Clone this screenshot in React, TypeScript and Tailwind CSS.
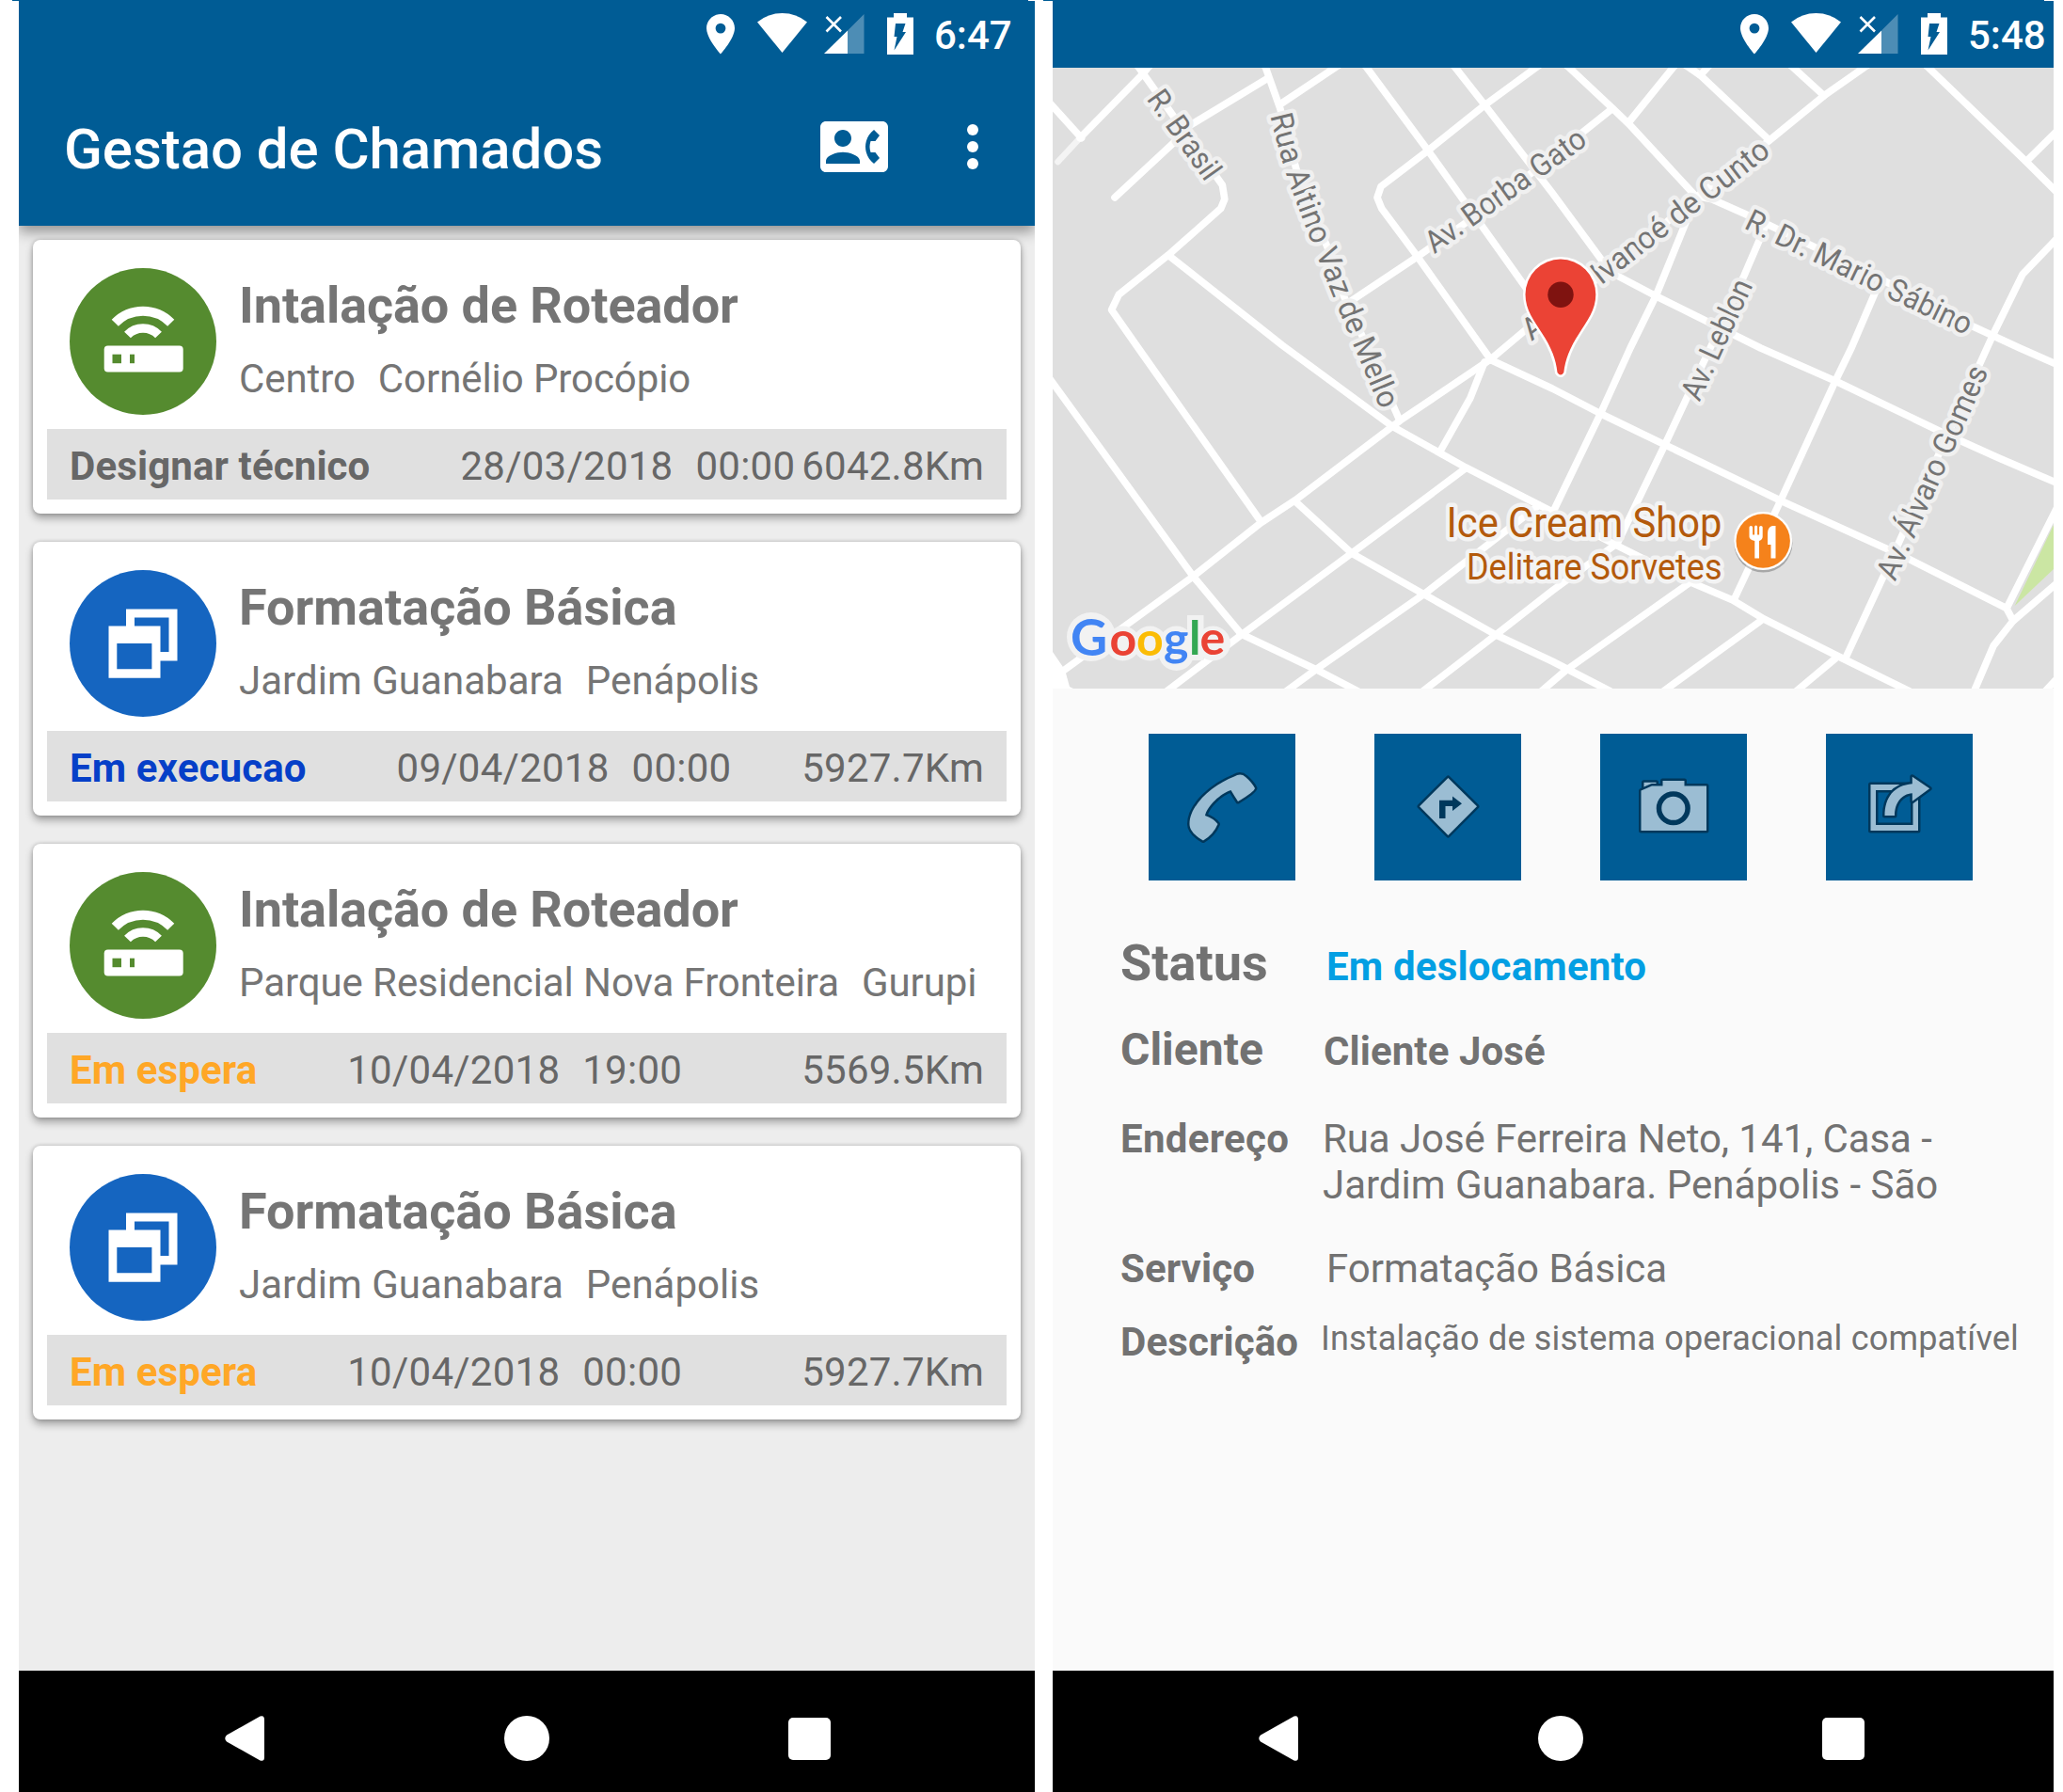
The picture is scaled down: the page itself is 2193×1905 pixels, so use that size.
import React from "react";

const roads: string[] = [
  "M1223.6 68L1215 78.3L1148 146.7",
  "M1208 68L1215 78L1299.4 196.7L1301.8 211.7L1297.7 221.7L1242.6 270.5L1189.2 313.3L1181.6 329.3L1210 370L1340 554",
  "M1115 108.5L1149.6 146.7",
  "M1347.6 83.3L1265 133.3L1246 153.3L1185 210",
  "M1344 68L1360.7 115L1382 195L1411.3 263.3L1428.5 315L1454 370L1487 445",
  "M1360.7 111L1425 68",
  "M1450 68L1518 160L1568 230L1620 303L1645 337",
  "M1544 68L1578.3 111.7L1650 205L1708.9 285L1719 293L1760.8 315L1871.6 370L1951 405L2069 461.7L2124.4 486.7L2190 515",
  "M1638 68L1578.3 111.7L1518 160L1468 198.3L1464 210L1468.8 221.7L1506 271.7L1576.6 371L1585 382.7",
  "M1712.3 116.7L1633 180L1575 225L1506 273.3L1433.7 321.7",
  "M1663.9 68L1714 115L1731.4 131.7L1802.4 208.3L1819.7 211.7L1864.7 231.7L1996 295L2096.7 346.7L2147 370L2190 389",
  "M1781.6 68L1731.4 130",
  "M1790 68L1807.5 80L1880 148.3",
  "M1820 66L1807.5 80",
  "M1902 68L1939 101.7",
  "M1987 68L1939 101.7L1880 150L1802.4 210L1712 286.7L1626.5 346.7L1585 381.7L1488.8 446.7L1376.9 531.7L1340 556L1268.4 612.7L1130.7 712.7",
  "M2046 68L2153.8 171.7L2190 208",
  "M2153.8 171.7L2190 136",
  "M2190 250L2150 291.7L2119 355L2075.9 450L2006.6 603L1961.6 700",
  "M1802 212L1760.8 313.3L1733 370L1702 438.3L1651 544",
  "M1876.8 240L1854 293L1818 370L1769.5 473.3L1719 578",
  "M1998 300L1968 370L1951 405L1892.4 533L1843 638",
  "M1585 382.7L1650 413L1702 440L1771 473.3L1892.4 532L2024 591.7L2133 646.7L2140 660L2119 686.7L2098 736",
  "M2140 660L2190 617",
  "M2133 646.7L2190 533",
  "M2190 718L2172 737",
  "M1578 385L1562.8 423.3L1530.8 480",
  "M1242.6 271.7L1363 367L1480 453.3L1557.7 496.7L1650 544L1719 580L1795.4 618.3L1842 638L1875 658L1954.7 698L2030 735",
  "M1114 400L1268.4 612.7L1319.4 674L1399 711.7L1444 735",
  "M1376.9 533L1437 588.3L1513.6 631.7L1590.4 675L1650 703L1712 735",
  "M1557.7 498L1437 588L1319.4 675L1240 735",
  "M1636 537L1513.6 631.7L1399 711.7L1367 735",
  "M1715.8 580L1650 628L1590 675L1511 736",
  "M1795.4 620L1664 713L1636 737",
  "M1871.6 660L1768 735",
  "M1951 700L1908 736",
];

type Street = { id: string; d: string; text: string; length: number };

const streets: Street[] = [
  { id: "brasil", d: "M1227.5 98.5L1292 189", text: "R. Brasil", length: 109 },
  { id: "altino", d: "M1361.5 120C1368 148 1375 172 1382 193L1403 249L1426.5 308L1455.5 377L1485 447", text: "Rua Altino Vaz de Mello", length: 333 },
  { id: "borba", d: "M1518 261L1700 130.5", text: "Av. Borba Gato", length: 202 },
  { id: "ivanoe", d: "M1695 294.5L1890 144", text: "Ivanoé de Cunto", length: 229 },
  { id: "sabino", d: "M1858 232L2110 353.5", text: "R. Dr. Mario Sábino", length: 263 },
  { id: "leblon", d: "M1796 423L1857 290", text: "Av. Leblon", length: 137 },
  { id: "alvaro", d: "M2004 614L2107 382", text: "Av. Álvaro Gomes", length: 245 },
];

function MapView() {
  return (
    <svg className="block h-[660px] w-[1064px]" viewBox="1119 72 1064 660" fontFamily="Roboto, sans-serif">
      <rect x="1119" y="72" width="1064" height="660" fill="#dfdfdf" />
      <polygon points="2184,556 2141.7,644 2184,604" fill="#cbe6a3" />
      <path d="M1148 146.7L1124.5 172" stroke="#f4f4f4" strokeWidth="6.5" strokeLinecap="round" />
      <g fill="none" stroke="#fff" strokeWidth="7.6" strokeLinecap="round" strokeLinejoin="round">
        {roads.map((d) => (
          <path key={d} d={d} />
        ))}
      </g>
      <polygon points="1119,693 1132,712 1137,730 1141,732 1119,732" fill="#fff" />

      <defs>
        {streets.map((s) => (
          <path key={s.id} id={s.id} d={s.d} />
        ))}
      </defs>
      <g fontSize="33" fill="#747474" stroke="#f0f0f0" strokeWidth="9" strokeLinejoin="round" paintOrder="stroke">
        {streets.map((s) => (
          <text key={s.id} dy="11.5" textLength={s.length} lengthAdjust="spacingAndGlyphs">
            <textPath href={`#${s.id}`} textLength={s.length} lengthAdjust="spacingAndGlyphs">
              {s.text}
            </textPath>
          </text>
        ))}
        <text transform="translate(1628 363) rotate(-37)">A</text>
      </g>

      <g fill="#b35a0c" stroke="#f3f3f3" strokeWidth="9" strokeLinejoin="round" paintOrder="stroke">
        <text x="1537.5" y="571" fontSize="44.5" textLength="293" lengthAdjust="spacingAndGlyphs">Ice Cream Shop</text>
        <text x="1559" y="616" fontSize="39" textLength="271.5" lengthAdjust="spacingAndGlyphs">Delitare Sorvetes</text>
      </g>

      <circle cx="1874.4" cy="577.5" r="31" fill="#000" opacity=".25" />
      <circle cx="1874.2" cy="575" r="31" fill="#fff" />
      <circle cx="1874.2" cy="575" r="28.7" fill="#f5821b" />
      <path
        fill="#fff"
        d="M1859.5 560.500q0-1.500 1.800-1.500t1.800 1.500v8h2v-8.500q0-1.500 1.500-1.500t1.500 1.500v8.500h2v-8q0-1.500 1.800-1.500t1.800 1.500v10q0 3-3.700 4.500v18.500h-4.700v-18.500q-5.800-1.500-5.800-4.500zM1887.500 559v34.500h-5v-14.500h-3.500v-12q0-6.500 5-8z"
      />

      <path
        d="M1621.500 313A37.400 37.400 0 0 1 1696.300 313C1696.300 330 1687 341 1679 354C1668.500 370 1664 382 1662.300 396Q1659 401 1655.500 396C1654 382 1649.500 370 1639 354C1631 341 1621.500 330 1621.500 313Z"
        fill="#eb4335"
        stroke="#fff"
        strokeWidth="5"
        paintOrder="stroke"
      />
      <circle cx="1659" cy="313.3" r="13.7" fill="#7f1310" />

      <g fill="#f2f2f2">
        <circle cx="1160" cy="677" r="26" />
        <circle cx="1193.7" cy="684" r="18.5" />
        <circle cx="1222.3" cy="684" r="18.5" />
        <circle cx="1250.5" cy="684" r="18.5" />
        <circle cx="1250.5" cy="694" r="19" />
        <rect x="1262" y="654" width="17.5" height="48" />
        <circle cx="1289.5" cy="684" r="18.5" />
      </g>
      <text y="697" fontFamily="Lato, sans-serif" fontSize="50" fontWeight="700">
        <tspan x="1138" y="696.5" fontSize="54" fill="#4285f4">G</tspan>
        <tspan x="1179.5" fill="#ea4335">o</tspan>
        <tspan x="1208" fill="#fbbc05">o</tspan>
        <tspan x="1237" fill="#4285f4">g</tspan>
        <tspan x="1264" y="696" fill="#34a853">l</tspan>
        <tspan x="1275.5" fill="#ea4335">e</tspan>
      </text>
    </svg>
  );
}

function StatusBar({ time }: { time: string }) {
  return (
    <div className="relative z-10 flex h-[71px] shrink-0 items-start bg-[#005c95] pl-[731px] pt-[13px] text-white">
      <svg className="mt-px h-[43px] w-[30px] shrink-0" viewBox="0 0 30 43" fill="currentColor">
        <path fillRule="evenodd" d="M15 0C6.700 0 0 6.700 0 15c0 11 15 27.500 15 27.500S30 26 30 15C30 6.700 23.300 0 15 0zm0 9.700a5.400 5.400 0 1 1 0 10.800a5.400 5.400 0 0 1 0-10.800z" />
      </svg>
      <svg className="ml-[24px] h-[42px] w-[53px] shrink-0" viewBox="0 0 53 42" fill="currentColor">
        <path d="M26.500 42L0 9.500Q11.500 0 26.500 0T53 9.500z" />
      </svg>
      <svg className="ml-[18px] h-[43px] w-[43px] shrink-0" viewBox="0 0 43 43">
        <path d="M42.500 1V43H25V18.500z" fill="#fff" opacity=".3" />
        <path d="M25 18.500V43H0z" fill="#fff" />
        <path d="M2.500 4L18 19.500M18 4L2.500 19.500" stroke="#fff" strokeWidth="2.600" />
      </svg>
      <svg className="ml-[24px] h-[44px] w-[28px] shrink-0" viewBox="0 0 28 44">
        <path d="M7 0H21V4.500H28V44H0V4.500H7z" fill="#fff" />
        <path d="M9 11H19.500L16.500 20H20L7.500 39.500L10.500 25H7.500z" fill="#005c95" />
      </svg>
      <span className="ml-[22px] text-[42px] font-medium leading-[48px]">{time}</span>
    </div>
  );
}

function NavBar() {
  return (
    <div className="flex h-[129px] shrink-0 items-start bg-black pl-[219px] pt-[48px]">
      <svg className="h-[48px] w-[42px] shrink-0" viewBox="0 0 42 48" fill="#fff">
        <path d="M37.500.500Q42-1 42 4V44Q42 49 37.500 47.500L2 27.500Q-1.500 24 2 20.500z" />
      </svg>
      <div className="ml-[255px] size-[48px] shrink-0 rounded-full bg-white" />
      <div className="ml-[253.5px] mt-[1.5px] size-[45px] shrink-0 rounded-[5px] bg-white" />
    </div>
  );
}

function RouterIcon() {
  return (
    <svg className="size-[156px] shrink-0" viewBox="0 0 156 156">
      <circle cx="78" cy="78" r="78" fill="#558b2f" />
      <g fill="none" stroke="#fff">
        <path d="M48.300 58.300A41.500 41.500 0 0 1 107.700 58.300" strokeWidth="10" />
        <path d="M61.500 71A23 23 0 0 1 94.500 71" strokeWidth="9.500" />
      </g>
      <rect x="36.700" y="82.500" width="84" height="28" rx="4" fill="#fff" />
      <rect x="45.500" y="91.700" width="9.500" height="9.500" fill="#558b2f" />
      <rect x="64" y="91.700" width="5" height="9.500" fill="#558b2f" />
    </svg>
  );
}

function WindowsIcon() {
  return (
    <svg className="size-[156px] shrink-0" viewBox="0 0 156 156">
      <circle cx="78" cy="78" r="78" fill="#1565c0" />
      <path fill="#fff" fillRule="evenodd" d="M60 41.500H114.500V96.500H60zM69 50.500V87H105.500V50.500z" />
      <path fill="#fff" d="M41.500 59.500H96.500V114.700H41.500z" />
      <path fill="#1565c0" d="M50.300 78H87.400V105.300H50.300z" />
    </svg>
  );
}

type Ticket = {
  kind: "router" | "windows";
  title: string;
  district: string;
  city: string;
  status: string;
  statusClass: string;
  date: string;
  time: string;
  km: string;
};

const tickets: Ticket[] = [
  { kind: "router", title: "Intalação de Roteador", district: "Centro", city: "Cornélio Procópio", status: "Designar técnico", statusClass: "text-[#676767]", date: "28/03/2018", time: "00:00", km: "6042.8Km" },
  { kind: "windows", title: "Formatação Básica", district: "Jardim Guanabara", city: "Penápolis", status: "Em execucao", statusClass: "text-[#063fc8]", date: "09/04/2018", time: "00:00", km: "5927.7Km" },
  { kind: "router", title: "Intalação de Roteador", district: "Parque Residencial Nova Fronteira", city: "Gurupi", status: "Em espera", statusClass: "text-[#ffa726]", date: "10/04/2018", time: "19:00", km: "5569.5Km" },
  { kind: "windows", title: "Formatação Básica", district: "Jardim Guanabara", city: "Penápolis", status: "Em espera", statusClass: "text-[#ffa726]", date: "10/04/2018", time: "00:00", km: "5927.7Km" },
];

function TicketCard({ t }: { t: Ticket }) {
  const router = t.kind === "router";
  return (
    <div className="h-[291px] rounded-[8px] bg-white px-[15px] pt-[30px] shadow-[0_5px_9px_rgba(0,0,0,0.32),0_0_4px_rgba(0,0,0,0.2)]">
      <div className="flex h-[156px] pl-[24px]">
        {router ? <RouterIcon /> : <WindowsIcon />}
        <div className="ml-[24px] whitespace-nowrap text-[#757575]">
          <div className={`mt-[8px] text-[54px] font-bold leading-[64px] ${router ? "tracking-[-0.08px]" : ""}`}>{t.title}</div>
          <div className={`mt-[21px] flex gap-[24px] text-[42px] leading-[49px] ${router ? "tracking-[-0.08px]" : "tracking-[0.03px]"}`}>
            <span>{t.district}</span>
            <span>{t.city}</span>
          </div>
        </div>
      </div>
      <div className="mt-[15px] flex h-[75px] whitespace-nowrap bg-[#e0e0e0] px-[24px] pt-[15px] text-[42px] leading-[49px] tracking-[0.25px] text-[#676767]">
        <span className={`font-bold tracking-[0.12px] ${t.statusClass}`}>{t.status}</span>
        <span className="ml-[96px]">{t.date}</span>
        <span className="ml-[24px]">{t.time}</span>
        <span className="ml-auto">{t.km}</span>
      </div>
    </div>
  );
}

function ListScreen() {
  return (
    <div className="flex h-[1904px] w-[1080px] shrink-0 flex-col overflow-hidden bg-[#ededed]">
      <StatusBar time="6:47" />
      <div className="flex h-[168px] shrink-0 items-center bg-[#005c95] pl-[48px] pr-[30px] text-white shadow-[0_6px_14px_rgba(0,0,0,0.4)]">
        <h1 className="pt-[5px] text-[60px] font-medium leading-[70px] tracking-[-0.06px]">Gestao de Chamados</h1>
        <svg className="ml-auto size-[72px]" viewBox="0 0 24 24" fill="currentColor">
          <path d="M22 3H2C.9 3 0 3.900 0 5v14c0 1.100.9 2 2 2h20c1.100 0 1.990-.9 1.990-2L24 5c0-1.100-.9-2-2-2zM8 6c1.660 0 3 1.340 3 3s-1.340 3-3 3-3-1.340-3-3 1.340-3 3-3zm6 12H2v-1c0-2 4-3.100 6-3.100s6 1.100 6 3.100v1zm3.850-4h1.640L21 16l-1.990 1.990c-1.310-.98-2.280-2.380-2.730-3.990-.18-.64-.28-1.310-.28-2s.1-1.360.28-2c.45-1.620 1.420-3.010 2.730-3.990L21 8l-1.510 2h-1.640c-.22.630-.35 1.300-.35 2s.13 1.370.35 2z" />
        </svg>
        <svg className="ml-[54px] size-[72px]" viewBox="0 0 24 24" fill="currentColor">
          <circle cx="12" cy="6" r="2" />
          <circle cx="12" cy="12" r="2" />
          <circle cx="12" cy="18" r="2" />
        </svg>
      </div>
      <div className="flex flex-1 flex-col gap-[30px] px-[15px] pt-[15px]">
        {tickets.map((t, i) => (
          <TicketCard key={i} t={t} />
        ))}
      </div>
      <NavBar />
    </div>
  );
}

function ActionButton({ children }: { children: React.ReactNode }) {
  return (
    <button className="size-[156px] shrink-0 bg-[#005c95]">
      <svg className="size-[156px]" viewBox="0 0 156 156" fill="#9bbdd3" stroke="#00385c" strokeWidth="5" strokeLinejoin="round" paintOrder="stroke">
        {children}
      </svg>
    </button>
  );
}

function Actions() {
  return (
    <div className="flex gap-[84px] pl-[102px] pt-[48px]">
      <ActionButton>
        <path d="M91 45.500Q98 41.500 103 46Q110 52 113 58Q112 62 95 72Q91 66 87.500 60C76 64 63 76 60 87Q69 90 73.500 96Q69 107 58 113.500C50 109 43.500 103 43.500 96C43.500 75 69 54 91 45.500Z" />
      </ActionButton>
      <ActionButton>
        <path d="M78.400 47L109 77.300L78.400 108L48 77.300Z" />
        <path d="M69 90V70.700H83V66.500L93 74.300L83 82V77H75.500V90Z" fill="#00385c" stroke="none" />
      </ActionButton>
      <ActionButton>
        <path d="M46.500 57V51.700H59.500V54L46.500 60Z" />
        <path d="M43.500 103V60.500L55 55.500H66.500V50H89.500V55.500H113V103Z" />
        <circle cx="77.800" cy="79.300" r="15.300" stroke="#00385c" strokeWidth="5.500" paintOrder="normal" />
      </ActionButton>
      <ActionButton>
        <path fillRule="evenodd" d="M47.500 54H98V103H47.500ZM53 60V97H92.500V60Z" />
        <path d="M62.500 87C62.500 68 72 55 91.800 53.300V45.700L110.200 58.300L91.800 71.700V63.300C80 64 73 74 73 87Z" />
      </ActionButton>
    </div>
  );
}

function Details() {
  return (
    <div className="flex flex-1 flex-col whitespace-nowrap pl-[72px] pt-[56px] text-[42px] leading-[49px] text-[#727272]">
      <div className="flex h-[64px] items-start">
        <span className="w-[219px] shrink-0 text-[54px] font-bold leading-[64px]">Status</span>
        <span className="mt-[11px] font-bold tracking-[0.18px] text-[#039fe3]">Em deslocamento</span>
      </div>
      <div className="mt-[32px] flex h-[56px] items-baseline">
        <span className="w-[216px] shrink-0 text-[48px] font-bold leading-[56px]">Cliente</span>
        <span className="font-bold tracking-[0.08px]">Cliente José</span>
      </div>
      <div className="mt-[42px] flex">
        <span className="w-[215px] shrink-0 font-bold tracking-[0.3px]">Endereço</span>
        <span>
          <span className="tracking-[-0.08px]">Rua José Ferreira Neto, 141, Casa -</span>
          <br />
          Jardim Guanabara. Penápolis - São
        </span>
      </div>
      <div className="mt-[40px] flex">
        <span className="w-[219px] shrink-0 font-bold tracking-[0.1px]">Serviço</span>
        <span>Formatação Básica</span>
      </div>
      <div className="mt-[29px] flex items-start">
        <span className="w-[213px] shrink-0 font-bold tracking-[0.12px]">Descrição</span>
        <span className="text-[36px] leading-[42px] tracking-[0.19px]">Instalação de sistema operacional compatível</span>
      </div>
    </div>
  );
}

function DetailScreen() {
  return (
    <div className="flex h-[1904px] w-[1064px] shrink-0 flex-col overflow-hidden bg-[#fafafa]">
      <StatusBar time="5:48" />
      <MapView />
      <Actions />
      <Details />
      <NavBar />
    </div>
  );
}

export default function App() {
  return (
    <div className="h-[1905px] w-[2193px] overflow-hidden bg-white font-['Roboto',sans-serif]">
      <div className="flex h-px gap-[16px] pl-[13px]">
        <div className="w-[1080px] bg-[#005c95]" />
        <div className="w-[1064px] bg-[#005c95]" />
      </div>
      <div className="flex gap-[19px] pl-[20px]">
        <ListScreen />
        <DetailScreen />
      </div>
    </div>
  );
}
